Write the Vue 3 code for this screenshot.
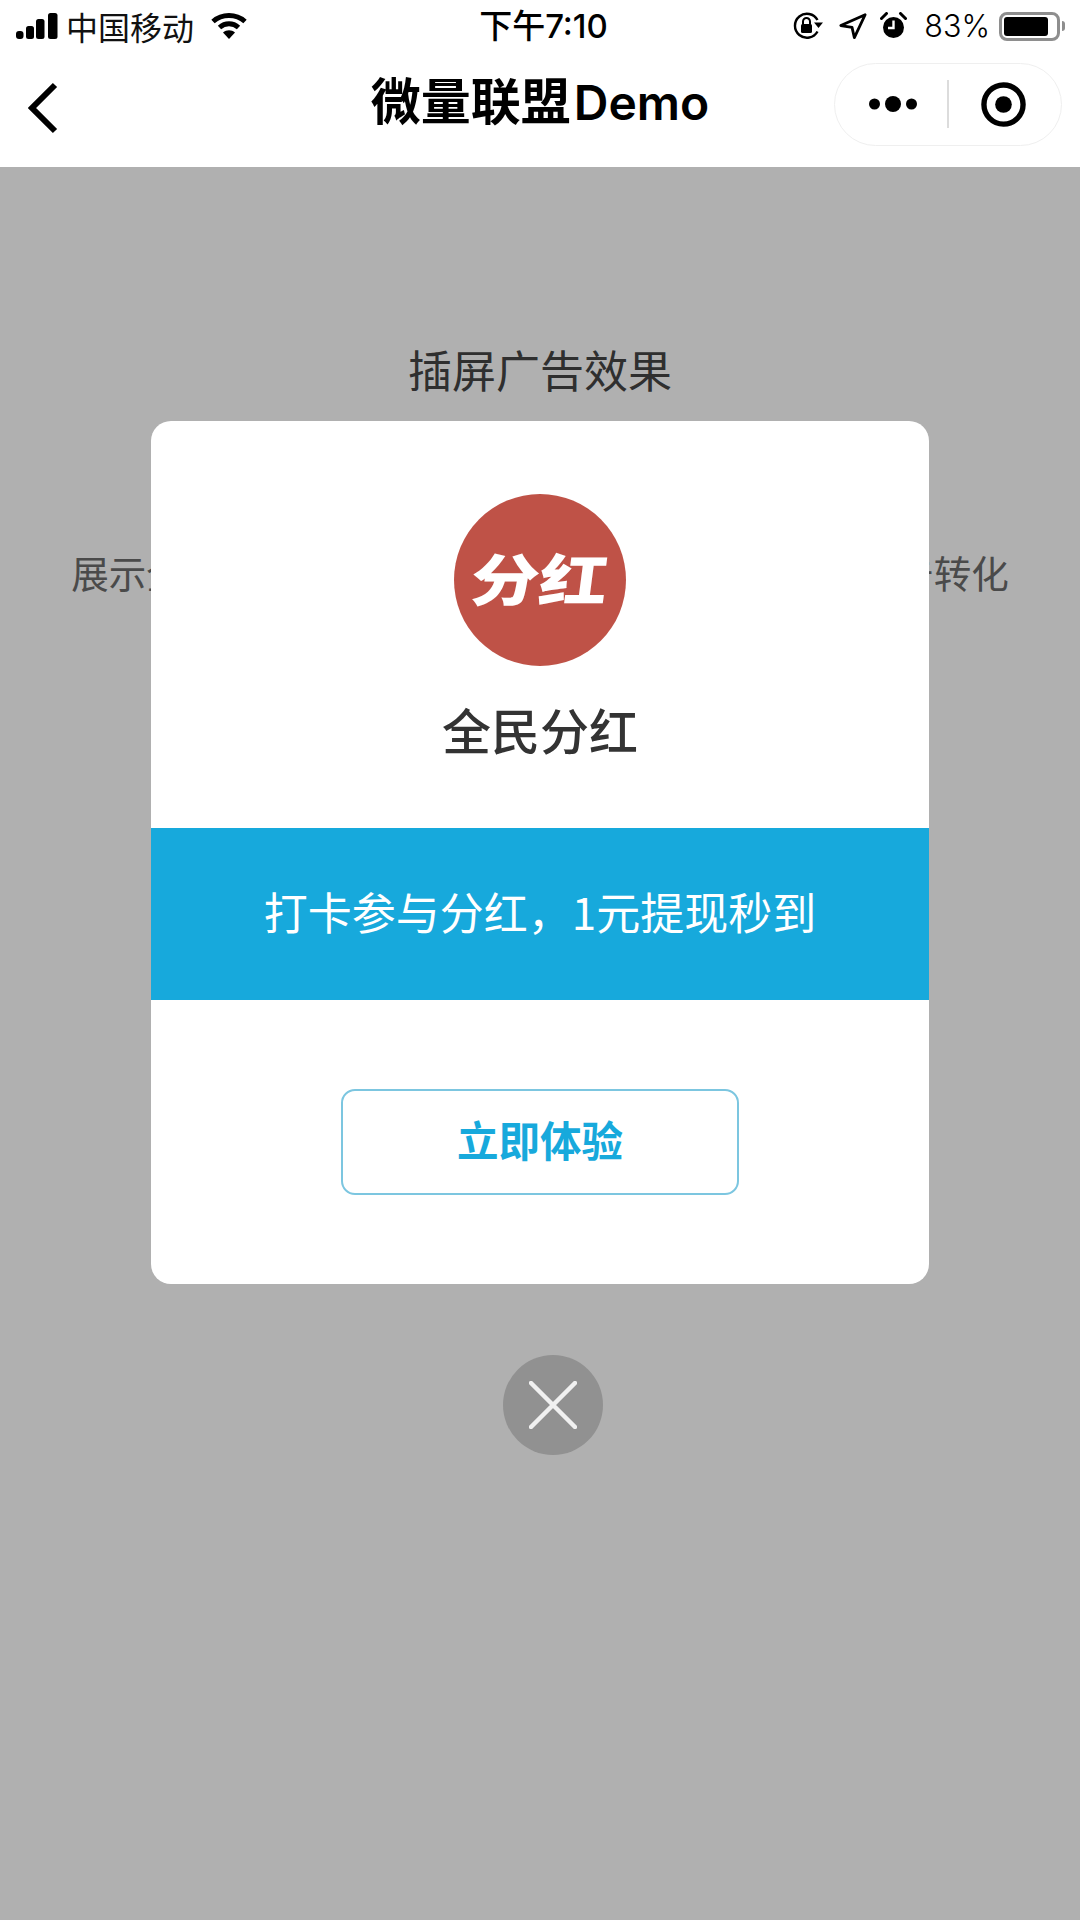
<script setup>
const statusCarrier = '中国移动'
</script>

<template>
  <div class="page">
    <header class="top">
      <div class="status">
        <div class="status-left">
          <svg class="signal" width="42" height="28" viewBox="0 0 42 28">
            <rect x="0" y="19" width="7.5" height="8" rx="3" />
            <rect x="10" y="14" width="8" height="13" rx="2.5" />
            <rect x="20" y="7" width="8.5" height="20" rx="2.5" />
            <rect x="32" y="1" width="9.5" height="26" rx="2.5" />
          </svg>
          <span class="carrier">{{ statusCarrier }}</span>
          <svg class="wifi" width="36" height="28" viewBox="0 0 36 28">
            <path d="M2 9.5C11 1.5 25 1.5 34 9.5" fill="none" stroke="#000" stroke-width="5" />
            <path d="M8.5 15.5C14 10.6 22 10.6 27.5 15.5" fill="none" stroke="#000" stroke-width="5" />
            <path d="M12 20.5C15.5 17.6 20.5 17.6 24 20.5L18 27Z" fill="#000" />
          </svg>
        </div>
        <div class="time">下午7:10</div>
        <div class="status-right">
          <svg class="rot" width="32" height="28" viewBox="0 0 32 28">
            <path d="M25.5 19.5A12 12 0 1 1 25.5 8" fill="none" stroke="#000" stroke-width="2.4" />
            <path d="M22 10.5L31 10.5L26.5 16Z" fill="#000" />
            <rect x="9" y="12" width="11" height="9" rx="1.5" fill="#000" />
            <path d="M11 12.5V9.5a3.5 3.5 0 0 1 7 0V12.5" fill="none" stroke="#000" stroke-width="2" />
          </svg>
          <svg class="loc" width="29" height="28" viewBox="0 0 31 28">
            <path d="M29 2L3 13.5L15 15.5L17.5 26.5Z" fill="none" stroke="#000" stroke-width="3" stroke-linejoin="round" />
          </svg>
          <svg class="alarm" width="27" height="28" viewBox="0 0 27 28">
            <circle cx="13.5" cy="15.5" r="10.5" fill="#000" />
            <path d="M13.5 8.5V16H8" fill="none" stroke="#fff" stroke-width="2.4" />
            <path d="M1.5 6.5L6.5 1.5M25.5 6.5L20.5 1.5" stroke="#000" stroke-width="3" stroke-linecap="round" />
          </svg>
          <span class="percent">83%</span>
          <div class="battery"><div class="battery-fill"></div></div>
          <div class="battery-nub"></div>
        </div>
      </div>
      <nav class="nav">
        <svg class="back" width="32" height="52" viewBox="0 0 32 52">
          <path d="M27 3L4 26L27 49" fill="none" stroke="#000" stroke-width="6" />
        </svg>
        <h1 class="nav-title">微量联盟<span class="latin">Demo</span></h1>
        <div class="capsule">
          <div class="capsule-side">
            <svg class="dots" width="48" height="18" viewBox="0 0 48 18">
              <circle cx="5.5" cy="9" r="5.5" />
              <circle cx="24" cy="9" r="8" />
              <circle cx="42.5" cy="9" r="5.5" />
            </svg>
          </div>
          <div class="capsule-line"></div>
          <div class="capsule-side">
            <svg class="target" width="45" height="45" viewBox="0 0 46 46">
              <circle cx="23" cy="23" r="20" fill="none" stroke="#000" stroke-width="5.5" />
              <circle cx="23" cy="23" r="8.5" />
            </svg>
          </div>
        </div>
      </nav>
    </header>

    <main class="content">
      <h2 class="heading">插屏广告效果</h2>
      <p class="desc">展示全屏插屏广告，提升流量收益，促进用户的点击转化</p>
    </main>

    <div class="mask">
      <section class="card">
        <div class="logo"><span class="logo-text">分红</span></div>
        <div class="name">全民分红</div>
        <div class="band">打卡参与分红，1元提现秒到</div>
        <div class="button">立即体验</div>
      </section>
      <div class="close">
        <svg width="48" height="48" viewBox="0 0 48 48">
          <path d="M2 2L46 46M46 2L2 46" stroke="#f0f0f0" stroke-width="4.5" stroke-linecap="round" />
        </svg>
      </div>
    </div>
  </div>
</template>

<style scoped>
.page {
  position: relative;
  width: 1080px;
  height: 1920px;
  overflow: hidden;
  background: #fff;
  font-family: "Noto Sans CJK SC", "Noto Sans", sans-serif;
  color: #000;
}
.top {
  height: 167px;
  display: flex;
  flex-direction: column;
}
.status {
  height: 54px;
  box-sizing: border-box;
  display: grid;
  grid-template-columns: 1fr auto 1fr;
  align-items: center;
  padding: 0 15px 2px 16px;
}
.status-left,
.status-right {
  display: flex;
  align-items: center;
}
.status-right {
  justify-content: flex-end;
}
.carrier {
  margin-left: 8px;
  font-size: 32px;
  line-height: 52px;
  color: #111;
}
.wifi {
  margin-left: 17px;
}
.time {
  margin-left: 6px;
  font-size: 33px;
  line-height: 52px;
  font-weight: 500;
}
.time,
.percent,
.latin {
  font-family: Inter, "Noto Sans CJK SC", sans-serif;
}
.loc {
  margin-left: 14px;
}
.alarm {
  margin-left: 13px;
}
.percent {
  margin-left: 17px;
  font-size: 30.5px;
  line-height: 52px;
  font-weight: 300;
}
.battery {
  margin-left: 9px;
  width: 61px;
  height: 29px;
  box-sizing: border-box;
  border: 3px solid #8e8e8e;
  border-radius: 8px;
  padding: 2px;
}
.battery-fill {
  width: 44px;
  height: 19px;
  background: #000;
  border-radius: 3px;
}
.battery-nub {
  margin-left: 2px;
  width: 3px;
  height: 10px;
  background: #8e8e8e;
  border-radius: 0 3px 3px 0;
}
.nav {
  flex: 1;
  display: grid;
  grid-template-columns: 1fr auto 1fr;
  align-items: center;
  padding: 0 18px 13px 28px;
}
.back {
  display: block;
  margin-top: 8px;
}
.nav-title {
  margin: 0 10px 0 0;
  padding-bottom: 8px;
  font-size: 50px;
  line-height: 64px;
  font-weight: 700;
  white-space: nowrap;
}
.latin {
  font-size: 48px;
  font-weight: 600;
  margin-left: 3px;
}
.capsule {
  justify-self: end;
  width: 228px;
  height: 83px;
  box-sizing: border-box;
  border: 1.5px solid #efefef;
  border-radius: 42px;
  display: flex;
  align-items: center;
}
.capsule-side {
  flex: 1;
  display: flex;
  justify-content: center;
  align-items: center;
}
.dots {
  margin-left: 3px;
}
.target {
  margin-right: 2px;
}
.capsule-line {
  width: 1.5px;
  height: 48px;
  background: #dcdcdc;
}
.content {
  text-align: center;
}
.heading {
  margin: 172px 0 0;
  font-size: 44px;
  line-height: 60px;
  font-weight: 400;
  color: #444;
}
.desc {
  margin: 148px 0 0;
  font-size: 37.5px;
  line-height: 50px;
  font-weight: 400;
  color: #6c6c6c;
  white-space: nowrap;
}
.mask {
  position: absolute;
  left: 0;
  right: 0;
  top: 167px;
  bottom: 0;
  background: rgba(0, 0, 0, 0.31);
  display: flex;
  flex-direction: column;
  align-items: center;
  padding-top: 254px;
}
.card {
  width: 778px;
  height: 863px;
  background: #fff;
  border-radius: 20px;
  overflow: hidden;
  display: flex;
  flex-direction: column;
  align-items: center;
  padding-top: 73px;
  box-sizing: border-box;
}
.logo {
  width: 172px;
  height: 172px;
  border-radius: 50%;
  background: #bf5247;
  display: flex;
  align-items: center;
  justify-content: center;
  padding-bottom: 8px;
  box-sizing: border-box;
}
.logo-text {
  color: #fff;
  font-size: 66px;
  line-height: 1;
  font-weight: 900;
  white-space: nowrap;
  transform: scale(1.04, 0.85) skewX(-6deg);
}
.name {
  margin-top: 33px;
  font-size: 49px;
  line-height: 60px;
  font-weight: 500;
  color: #333;
}
.band {
  margin-top: 69px;
  align-self: stretch;
  height: 172px;
  background: #17a9dc;
  color: #fff;
  font-size: 44px;
  font-weight: 400;
  padding-bottom: 7px;
  box-sizing: border-box;
  display: flex;
  align-items: center;
  justify-content: center;
}
.button {
  margin-top: 89px;
  width: 398px;
  height: 106px;
  box-sizing: border-box;
  border: 2px solid #7cc6e0;
  border-radius: 14px;
  color: #17a9dc;
  font-size: 41.5px;
  font-weight: 700;
  padding-bottom: 6px;
  display: flex;
  align-items: center;
  justify-content: center;
}
.close {
  margin: 71px 0 0 26px;
  width: 100px;
  height: 100px;
  border-radius: 50%;
  background: #919191;
  display: flex;
  align-items: center;
  justify-content: center;
}
</style>
